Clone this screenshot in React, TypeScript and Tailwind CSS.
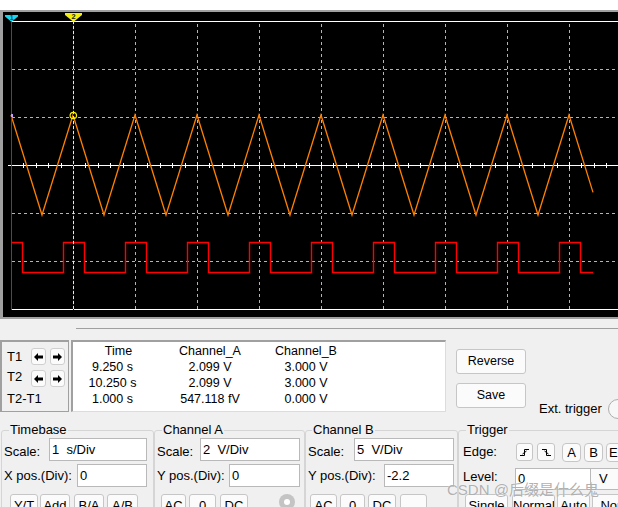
import React from 'react';

// vertical grid lines (x = 11 and 73 are covered by the cursors)
const GRID_X = [135, 197, 259, 321, 383, 445, 507, 569];
const GRID_Y = [69, 117, 213, 261];

const Scope: React.FC = () => {
  // triangle wave, channel A
  const tri: string[] = [];
  for (let k = 0; k < 10; k++) {
    tri.push(`${11 + 62 * k},115`);
    if (k < 9) tri.push(`${42 + 62 * k},215`);
  }
  tri.push('593,192.4');

  // square wave, channel B
  const sq: string[] = ['11.5,242.5', '22.5,242.5', '22.5,272.5'];
  for (let k = 0; k < 9; k++) {
    const a = 63.5 + 62 * k;
    const b = 84.5 + 62 * k;
    sq.push(`${a},272.5`, `${a},242.5`, `${b},242.5`, `${b},272.5`);
  }
  sq.push('593,272.5');

  const ticks: number[] = [];
  for (let x = 11 + 12.4; x < 618; x += 12.4) ticks.push(Math.round(x) + 0.5);

  return (
    <svg className="block" width={615} height={305} viewBox="3 12 615 305">
      <rect x={3} y={12} width={615} height={305} fill="#000" />
      {/* grid */}
      {GRID_X.map((x) => (
        <line key={x} x1={x + 0.5} y1={24} x2={x + 0.5} y2={309} stroke="#b4b4b4" strokeWidth={1} strokeDasharray="3 3" shapeRendering="crispEdges" />
      ))}
      {GRID_Y.map((y) => (
        <line key={y} x1={12} y1={y + 0.5} x2={618} y2={y + 0.5} stroke="#b4b4b4" strokeWidth={1} strokeDasharray="3 3" shapeRendering="crispEdges" />
      ))}
      <line x1={11} y1={21.5} x2={618} y2={21.5} stroke="#fff" strokeWidth={1.2} />
      <line x1={11} y1={309.5} x2={618} y2={309.5} stroke="#fff" strokeWidth={1.2} />
      <line x1={8} y1={165.5} x2={618} y2={165.5} stroke="#fff" strokeWidth={1.2} />
      {ticks.map((x, i) => (
        <line key={i} x1={x} y1={(i + 1) % 5 === 0 ? 162 : 163} x2={x} y2={(i + 1) % 5 === 0 ? 169 : 168} stroke="#fff" strokeWidth={1} />
      ))}

      {/* signals */}
      <polyline points={sq.join(' ')} fill="none" stroke="#ff0000" strokeWidth={1.4} />
      <polyline points={tri.join(' ')} fill="none" stroke="#ff8000" strokeWidth={1.3} />

      {/* cursor 1 */}
      <line x1={11.5} y1={21} x2={11.5} y2={310} stroke="#ff0000" strokeWidth={1} />
      <polygon points="5,15 18,15 18,16.5 12,21.5 11,21.5 5,16.5" fill="#19d7ea" />
      <text x={11.6} y={20} fontSize={7} fontWeight={700} textAnchor="middle" fill="#0d4e5a" fontFamily="Liberation Sans, sans-serif">1</text>
      <rect x={11} y={114} width={2} height={3} fill="#c9a0ff" />

      {/* cursor 2 */}
      <line x1={73.5} y1={21} x2={73.5} y2={310} stroke="#1a1a6e" strokeWidth={1} />
      <line x1={73.5} y1={21} x2={73.5} y2={310} stroke="#ffff33" strokeWidth={1} strokeDasharray="3 2" />
      <polygon points="65,13 82,13 82,15 74,21.5 73,21.5 65,15" fill="#f2ee10" />
      <text x={73.5} y={19} fontSize={7.5} fontWeight={700} textAnchor="middle" fill="#1a1a1a" fontFamily="Liberation Sans, sans-serif">2</text>
      <circle cx={73.3} cy={115.5} r={3.2} fill="none" stroke="#f6f200" strokeWidth={1.2} />
    </svg>
  );
};

const Arrow: React.FC<{ dir: 'l' | 'r' }> = ({ dir }) => (
  <svg width={9} height={8} viewBox="0 0 9 8" className={dir === 'r' ? '-scale-x-100' : ''}>
    <polygon points="0,4 4,0 4,2.5 9,2.5 9,5.5 4,5.5 4,8" fill="#000" />
  </svg>
);

const ArrowBtn: React.FC<{ dir: 'l' | 'r'; className?: string }> = ({ dir, className = '' }) => (
  <div className={`flex h-[17px] w-[15px] shrink-0 items-center justify-center rounded-[3px] border border-[#cfcfcf] bg-[#fbfbfb] ${className}`}>
    <Arrow dir={dir} />
  </div>
);

const Input: React.FC<{ w: string; value: string }> = ({ w, value }) => (
  <div className={`h-[23px] ${w} shrink-0 whitespace-pre border border-[#b9b9b9] bg-white pl-[2px] leading-[21px]`}>{value}</div>
);

const Btn: React.FC<{ w: string; label?: string; className?: string }> = ({ w, label = '', className = '' }) => (
  <div className={`h-[23px] ${w} shrink-0 overflow-hidden rounded-[3px] border border-[#c6c6c6] bg-[#fbfbfb] text-center leading-[21px] ${className}`}>
    {label}
  </div>
);

const EdgeIcon: React.FC<{ rising: boolean }> = ({ rising }) => (
  <svg width={11} height={11} viewBox="0 0 11 11">
    {rising ? (
      <>
        <path d="M1 8.5 H5.5 V2.5 H10" fill="none" stroke="#000" strokeWidth={1} />
        <path d="M3.5 7 L7.5 4" fill="none" stroke="#000" strokeWidth={1} />
      </>
    ) : (
      <>
        <path d="M1 2.5 H5.5 V8.5 H10" fill="none" stroke="#000" strokeWidth={1} />
        <path d="M3.5 4 L7.5 7" fill="none" stroke="#000" strokeWidth={1} />
      </>
    )}
  </svg>
);

const rows = [
  ['9.250 s', '2.099 V', '3.000 V'],
  ['10.250 s', '2.099 V', '3.000 V'],
  ['1.000 s', '547.118 fV', '0.000 V'],
];

export default function App() {
  return (
    <div className="relative h-[507px] w-[618px] overflow-hidden bg-[#f0f0f0] font-['Liberation_Sans','Noto_Sans_CJK_SC',sans-serif] text-[13px] leading-4 text-black">
      <div className="h-[10px] bg-white" />

      {/* scope screen */}
      <div className="h-[309px] border-y-2 border-l-[3px] border-[#a0a0a0] bg-black">
        <Scope />
      </div>

      <div className="ml-[76px] mt-[9px] h-px bg-[#a0a0a0]" />

      {/* cursor readout */}
      <div className="mt-[11px] flex h-[72px]">
        <div className="flex w-[69px] shrink-0 flex-col border-2 border-b border-r border-[#a0a0a0] pl-[5px] pt-[6px]">
          <div className="flex h-[17px] items-center">
            <span className="w-[24px] pt-[1px]">T1</span>
            <ArrowBtn dir="l" />
            <ArrowBtn dir="r" className="ml-[4px]" />
          </div>
          <div className="mt-[5px] flex h-[17px] items-center">
            <span className="w-[24px] pb-[3px]">T2</span>
            <ArrowBtn dir="l" />
            <ArrowBtn dir="r" className="ml-[4px]" />
          </div>
          <div className="mt-[4px]">T2-T1</div>
        </div>

        <div className="ml-[2px] w-[375px] shrink-0 border-b border-l-2 border-r border-t-2 border-[#a0a0a0] border-b-[#dcdcdc] border-r-[#dcdcdc] bg-white pt-px text-[12.5px]">
          <div className="flex h-[16px] leading-4">
            <div className="w-[79px] pl-[12px] text-center">Time</div>
            <div className="w-[116px] text-center">Channel_A</div>
            <div className="w-[76px] text-center">Channel_B</div>
          </div>
          {rows.map((r) => (
            <div key={r[0]} className="flex h-[16px] leading-4">
              <div className="w-[79px] text-center">{r[0]}</div>
              <div className="w-[116px] text-center">{r[1]}</div>
              <div className="w-[76px] text-center">{r[2]}</div>
            </div>
          ))}
        </div>

        <div className="ml-[10px] flex shrink-0 flex-col gap-[9px] pt-[9px] text-[12.5px]">
          <div className="h-[25px] w-[70px] rounded-[3px] border border-[#c6c6c6] bg-[#fbfbfb] text-center leading-[23px]">Reverse</div>
          <div className="h-[25px] w-[70px] rounded-[3px] border border-[#c6c6c6] bg-[#fbfbfb] text-center leading-[23px]">Save</div>
        </div>

        <div className="ml-[13px] mt-[59px] flex h-[20px] shrink-0 items-center gap-[6px] self-start">
          <span className="whitespace-nowrap">Ext. trigger</span>
          <div className="h-[20px] w-[20px] shrink-0 rounded-full border border-[#adadad] bg-[#f7f7f7]" />
        </div>
      </div>

      {/* control groups */}
      <div className="mt-[10px] flex">
        <fieldset className="ml-px w-[153px] shrink-0 rounded-[3px] border border-[#d5d5d5] pl-[2px] pr-[6px]">
          <legend className="ml-[5px] px-px">Timebase</legend>
          <div className="flex h-[23px] items-center justify-between">
            <span className="pt-[4px]">Scale:</span>
            <Input w="w-[98px]" value="1  s/Div" />
          </div>
          <div className="mt-[3px] flex h-[23px] items-center justify-between">
            <span>X pos.(Div):</span>
            <Input w="w-[70px]" value="0" />
          </div>
          <div className="mt-[7px] flex">
            <Btn w="w-[28px]" label="Y/T" className="ml-[6px]" />
            <Btn w="w-[30px]" label="Add" className="ml-[2px]" />
            <Btn w="w-[30px]" label="B/A" className="ml-[4px]" />
            <Btn w="w-[31px]" label="A/B" className="ml-[3px]" />
          </div>
        </fieldset>

        <fieldset className="w-[151px] shrink-0 rounded-[3px] border border-[#d5d5d5] pl-[2px] pr-[4px]">
          <legend className="ml-[5px] px-px">Channel A</legend>
          <div className="flex h-[23px] items-center justify-between">
            <span className="pt-[4px]">Scale:</span>
            <Input w="w-[100px]" value="2  V/Div" />
          </div>
          <div className="mt-[3px] flex h-[23px] items-center justify-between">
            <span>Y pos.(Div):</span>
            <Input w="w-[71px]" value="0" />
          </div>
          <div className="mt-[7px] flex">
            <Btn w="w-[25px]" label="AC" className="ml-[4px]" />
            <Btn w="w-[27px]" label="0" className="ml-[3px]" />
            <Btn w="w-[28px]" label="DC" className="ml-[4px]" />
            <div className="ml-[31px] flex h-[16px] w-[16px] items-center justify-center rounded-full bg-[#c4c4c4]">
              <div className="h-[6px] w-[6px] rounded-full bg-white" />
            </div>
          </div>
        </fieldset>

        <fieldset className="w-[153px] shrink-0 rounded-[3px] border border-[#d5d5d5] pl-[2px] pr-[3px]">
          <legend className="ml-[4px] px-px">Channel B</legend>
          <div className="flex h-[23px] items-center justify-between">
            <span className="pt-[4px]">Scale:</span>
            <Input w="w-[100px]" value="5  V/Div" />
          </div>
          <div className="mt-[3px] flex h-[23px] items-center justify-between">
            <span>Y pos.(Div):</span>
            <Input w="w-[70px]" value="-2.2" />
          </div>
          <div className="mt-[7px] flex">
            <Btn w="w-[27px]" label="AC" className="ml-[2px]" />
            <Btn w="w-[25px]" label="0" className="ml-[3px]" />
            <Btn w="w-[28px]" label="DC" className="ml-[3px]" />
            <Btn w="w-[27px]" className="ml-[4px]" />
          </div>
        </fieldset>

        <fieldset className="w-[175px] shrink-0 rounded-[3px] border border-[#d5d5d5] pl-[4px]">
          <legend className="ml-[3px] px-px">Trigger</legend>
          <div className="mt-[4px] flex h-[20px] items-center">
            <span className="w-[53px] shrink-0">Edge:</span>
            <div className="flex h-[18px] w-[17px] shrink-0 items-center justify-center rounded-[3px] border border-[#c6c6c6] bg-[#fbfbfb]">
              <EdgeIcon rising />
            </div>
            <div className="ml-[4px] flex h-[18px] w-[18px] shrink-0 items-center justify-center rounded-[3px] border border-[#c6c6c6] bg-[#fbfbfb]">
              <EdgeIcon rising={false} />
            </div>
            <div className="ml-[7px] h-[19px] w-[19px] shrink-0 rounded-[4px] border border-[#c6c6c6] bg-[#fbfbfb] text-center leading-[17px]">A</div>
            <div className="ml-[3px] h-[19px] w-[19px] shrink-0 rounded-[4px] border border-[#c6c6c6] bg-[#fbfbfb] text-center leading-[17px]">B</div>
            <div className="ml-[3px] h-[19px] w-[24px] shrink-0 overflow-hidden rounded-[4px] border border-[#c6c6c6] bg-[#fbfbfb] pl-[2px] leading-[17px]">Ext</div>
          </div>
          <div className="mt-[6px] flex h-[22px] items-center">
            <span className="w-[52px] shrink-0 pb-[4px]">Level:</span>
            <div className="h-[22px] w-[76px] shrink-0 border border-[#b9b9b9] bg-white pl-[2px] leading-[20px]">0</div>
            <div className="h-[22px] w-[40px] shrink-0 border border-l-0 border-[#b9b9b9] bg-[#fbfbfb] pl-[8px] leading-[20px]">V</div>
          </div>
          <div className="mt-[4px] flex">
            <Btn w="w-[43px]" label="Single" className="ml-[2px]" />
            <Btn w="w-[43px]" label="Normal" className="ml-[4px]" />
            <Btn w="w-[33px]" label="Auto" className="ml-[2px]" />
            <Btn w="w-[48px]" label="None" className="ml-[2px]" />
          </div>
        </fieldset>
      </div>

      {/* watermark */}
      <div className="pointer-events-none absolute left-[447px] top-[481px] whitespace-nowrap text-[15px] leading-[18px] text-[#9c9c9c]/80 [text-shadow:0_0_1px_#fff]">
        CSDN @后缀是什么鬼
      </div>
    </div>
  );
}
